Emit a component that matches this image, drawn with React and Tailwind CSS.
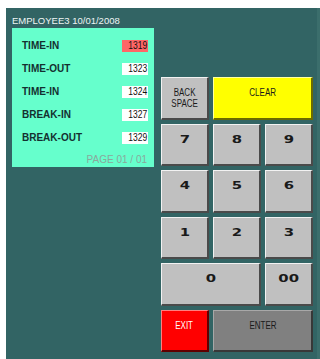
const rows = [
  { label: 'TIME-IN', value: '1319', active: true },
  { label: 'TIME-OUT', value: '1323' },
  { label: 'TIME-IN', value: '1324' },
  { label: 'BREAK-IN', value: '1327' },
  { label: 'BREAK-OUT', value: '1329' },
]

const font = { fontFamily: '"Liberation Sans", Arial, sans-serif' }

function Key({ children, tone = 'gray', digit = false, className = '' }) {
  const tones = {
    gray: 'bg-[#c0c0c0] border-t-[#f2f2f2] border-l-[#f2f2f2] border-r-[#4a4a4a] border-b-[#4a4a4a] text-[#1a1a1a]',
    yellow: 'bg-[#ffff00] border-t-[#ffffa0] border-l-[#ffffa0] border-r-[#6b6b00] border-b-[#6b6b00] text-[#1a1a1a]',
    red: 'bg-[#ff0000] border-t-[#ff8080] border-l-[#ff8080] border-r-[#600000] border-b-[#600000] text-white',
    dark: 'bg-[#808080] border-t-[#a8a8a8] border-l-[#a8a8a8] border-r-[#383838] border-b-[#383838] text-[#1a1a1a]',
  }
  return (
    <div
      className={`flex justify-center border-t border-l border-r-2 border-b-2 ${tones[tone]} ${className}`}
    >
      {digit ? (
        <span
          className="mt-[9px] block scale-x-[1.35] text-[11px] font-bold leading-[11px]"
          style={{ fontFamily: '"DejaVu Sans", sans-serif' }}
        >
          {children}
        </span>
      ) : (
        <span className="mt-[9px] block scale-x-[0.8] text-center text-[10px] leading-[11px]" style={font}>
          {children}
        </span>
      )}
    </div>
  )
}

export default function App() {
  return (
    <div className="h-[359px] w-[320px] bg-white pl-[6px] pt-[8px]">
      <div className="flex h-full bg-[#326464] border-r-[3px] border-[#3b6e6c]">
        {/* employee panel */}
        <div className="flex w-[155px] flex-col pl-[6px]">
          <div className="h-[20px] pt-[8px] text-[9.5px] leading-[10px] text-[#eef5f5]" style={font}>
            EMPLOYEE3 10/01/2008
          </div>
          <div className="w-[142px] bg-[#66ffcc] pt-[6px]">
            {rows.map((row, i) => (
              <div key={i} className="flex h-[23px] items-center justify-between pl-[10px] pr-[6px]">
                <span className="text-[10px] font-bold text-[#143030]" style={font}>
                  {row.label}
                </span>
                <span
                  className={`flex h-[12px] w-[26px] items-center justify-end pr-[1px] ${row.active ? 'bg-[#ff6666]' : 'bg-white'}`}
                >
                  <span className="block origin-right scale-x-[0.85] text-[10px] leading-[10px] text-[#111]" style={font}>
                    {row.value}
                  </span>
                </span>
              </div>
            ))}
            <div className="flex h-[18px] items-end justify-end pb-[2px] pr-[7px]">
              <span className="text-[10px] leading-[10px] text-[#8aa89c]" style={font}>
                PAGE 01 / 01
              </span>
            </div>
          </div>
        </div>

        {/* keypad */}
        <div className="pt-[69px]">
          <div className="grid grid-cols-[repeat(3,48px)] auto-rows-[42.5px] gap-[4px]">
            <Key>
              BACK
              <br />
              SPACE
            </Key>
            <Key tone="yellow" className="col-span-2">CLEAR</Key>
            <Key digit>7</Key>
            <Key digit>8</Key>
            <Key digit>9</Key>
            <Key digit>4</Key>
            <Key digit>5</Key>
            <Key digit>6</Key>
            <Key digit>1</Key>
            <Key digit>2</Key>
            <Key digit>3</Key>
            <Key digit className="col-span-2">0</Key>
            <Key digit>00</Key>
            <Key tone="red">EXIT</Key>
            <Key tone="dark" className="col-span-2">ENTER</Key>
          </div>
        </div>
      </div>
    </div>
  )
}
